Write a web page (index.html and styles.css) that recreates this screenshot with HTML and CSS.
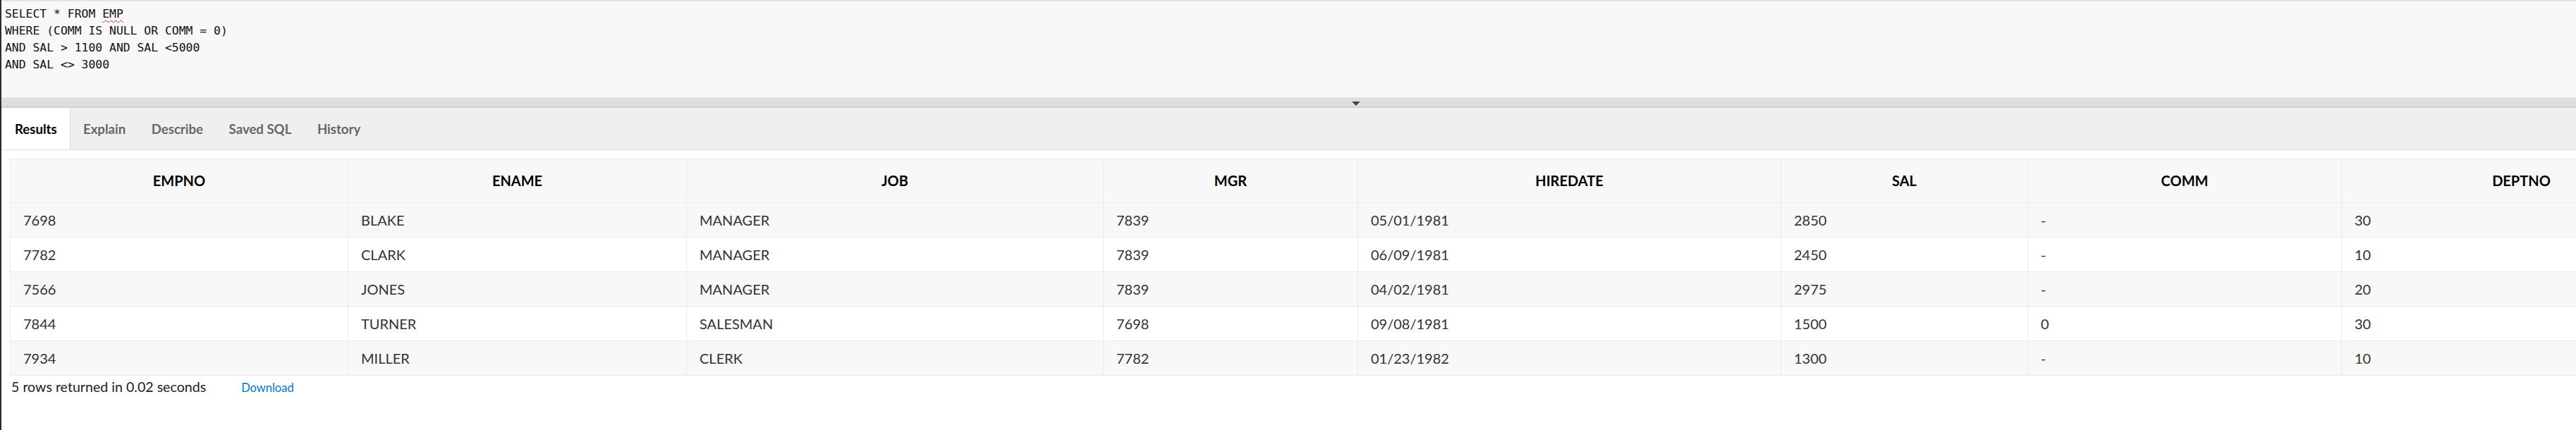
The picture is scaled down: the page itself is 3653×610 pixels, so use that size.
FILE: index.html
```html
<!DOCTYPE html>
<html lang="en">
<head>
<meta charset="utf-8">
<title>SQL Commands</title>
<link rel="stylesheet" href="styles.css">
</head>
<body>
<div class="app">
  <pre class="editor">SELECT * FROM <span class="spell">EMP</span>
WHERE (COMM IS NULL OR COMM = 0)
AND SAL &gt; 1100 AND SAL &lt;5000
AND SAL &lt;&gt; 3000</pre>
  <div class="splitter"><span class="arrow"></span></div>
  <div class="tabbar">
    <div class="tab active">Results</div>
    <div class="tab">Explain</div>
    <div class="tab">Describe</div>
    <div class="tab">Saved SQL</div>
    <div class="tab">History</div>
  </div>
  <div class="results">
    <table class="grid">
      <colgroup>
        <col class="c1"><col class="c2"><col class="c3"><col class="c4">
        <col class="c5"><col class="c6"><col class="c7"><col class="c8">
      </colgroup>
      <thead>
        <tr><th>EMPNO</th><th>ENAME</th><th>JOB</th><th>MGR</th><th>HIREDATE</th><th>SAL</th><th>COMM</th><th>DEPTNO</th></tr>
      </thead>
      <tbody>
        <tr><td>7698</td><td>BLAKE</td><td>MANAGER</td><td>7839</td><td>05/01/1981</td><td>2850</td><td>-</td><td>30</td></tr>
        <tr><td>7782</td><td>CLARK</td><td>MANAGER</td><td>7839</td><td>06/09/1981</td><td>2450</td><td>-</td><td>10</td></tr>
        <tr><td>7566</td><td>JONES</td><td>MANAGER</td><td>7839</td><td>04/02/1981</td><td>2975</td><td>-</td><td>20</td></tr>
        <tr><td>7844</td><td>TURNER</td><td>SALESMAN</td><td>7698</td><td>09/08/1981</td><td>1500</td><td>0</td><td>30</td></tr>
        <tr><td>7934</td><td>MILLER</td><td>CLERK</td><td>7782</td><td>01/23/1982</td><td>1300</td><td>-</td><td>10</td></tr>
      </tbody>
    </table>
    <div class="footer">
      <span class="count">5 rows returned in 0.02 seconds</span>
      <a class="download" href="#">Download</a>
    </div>
  </div>
</div>
</body>
</html>
```
FILE: styles.css
```css
html, body {
  margin: 0;
  padding: 0;
  height: 100%;
  overflow: hidden;
  background: #ffffff;
}

body {
  font-family: Lato, "Open Sans", sans-serif;
}

.app {
  width: 3844px;
  min-height: 610px;
  box-sizing: border-box;
  border-left: 2px solid #2b2b2b;
  display: flex;
  flex-direction: column;
}

.editor {
  margin: 0;
  height: 140px;
  box-sizing: border-box;
  background: #f8f8f8;
  border-top: 2px solid #e4e4e4;
  border-bottom: 2px solid #e2e2e2;
  padding: 6px 5px;
  font-family: "DejaVu Sans Mono", "Liberation Mono", monospace;
  font-size: 16.4px;
  line-height: 24px;
  color: #111111;
  white-space: pre;
}

.spell {
  text-decoration: underline wavy #e0302a;
  text-decoration-thickness: 1px;
  text-underline-offset: 3px;
}

.splitter {
  height: 13px;
  box-sizing: border-box;
  background: #dedede;
  border-bottom: 2px solid #d1d1d1;
  display: flex;
  justify-content: center;
  align-items: flex-start;
  padding-top: 4px;
}

.arrow {
  width: 0;
  height: 0;
  border-left: 6px solid transparent;
  border-right: 6px solid transparent;
  border-top: 6px solid #444444;
}

.tabbar {
  height: 60px;
  box-sizing: border-box;
  background: #efefef;
  border-bottom: 1px solid #dcdcdc;
  display: flex;
  align-items: stretch;
}

.tab {
  padding: 0 18.3px;
  display: flex;
  align-items: center;
  font-size: 18.6px;
  font-weight: 700;
  color: #666666;
}

.tab.active {
  margin-left: 1px;
  padding: 0 18px;
  background: #ffffff;
  color: #000000;
  border-right: 1px solid #d9d9d9;
}

.results {
  padding: 12px 12px 0;
}

.grid {
  border-collapse: collapse;
  table-layout: fixed;
  width: 3816px;
  border: 1px solid #ebebeb;
  font-size: 20px;
  color: #333333;
}

.c1 { width: 479px; }
.c2 { width: 480px; }
.c3 { width: 591px; }
.c4 { width: 361px; }
.c5 { width: 600px; }
.c6 { width: 350px; }
.c7 { width: 445px; }
.c8 { width: 510px; }

.grid th {
  background: #f8f8f8;
  color: #000000;
  font-weight: 700;
  text-align: center;
  line-height: 24px;
  padding: 18px 18px 19px;
  border: 1px solid #ebebeb;
}

.grid td {
  text-align: left;
  line-height: 24px;
  padding: 12px 18px;
  border: 1px solid #ebebeb;
  background: #ffffff;
}

.grid tbody tr:nth-child(odd) td {
  background: #f8f8f8;
}

.footer {
  display: flex;
  align-items: baseline;
  padding: 1px 2px 0;
  line-height: 30px;
}

.count {
  font-size: 19.6px;
  color: #222222;
}

.download {
  margin-left: 50px;
  font-size: 16.5px;
  color: #0572ce;
  text-decoration: none;
}
```
